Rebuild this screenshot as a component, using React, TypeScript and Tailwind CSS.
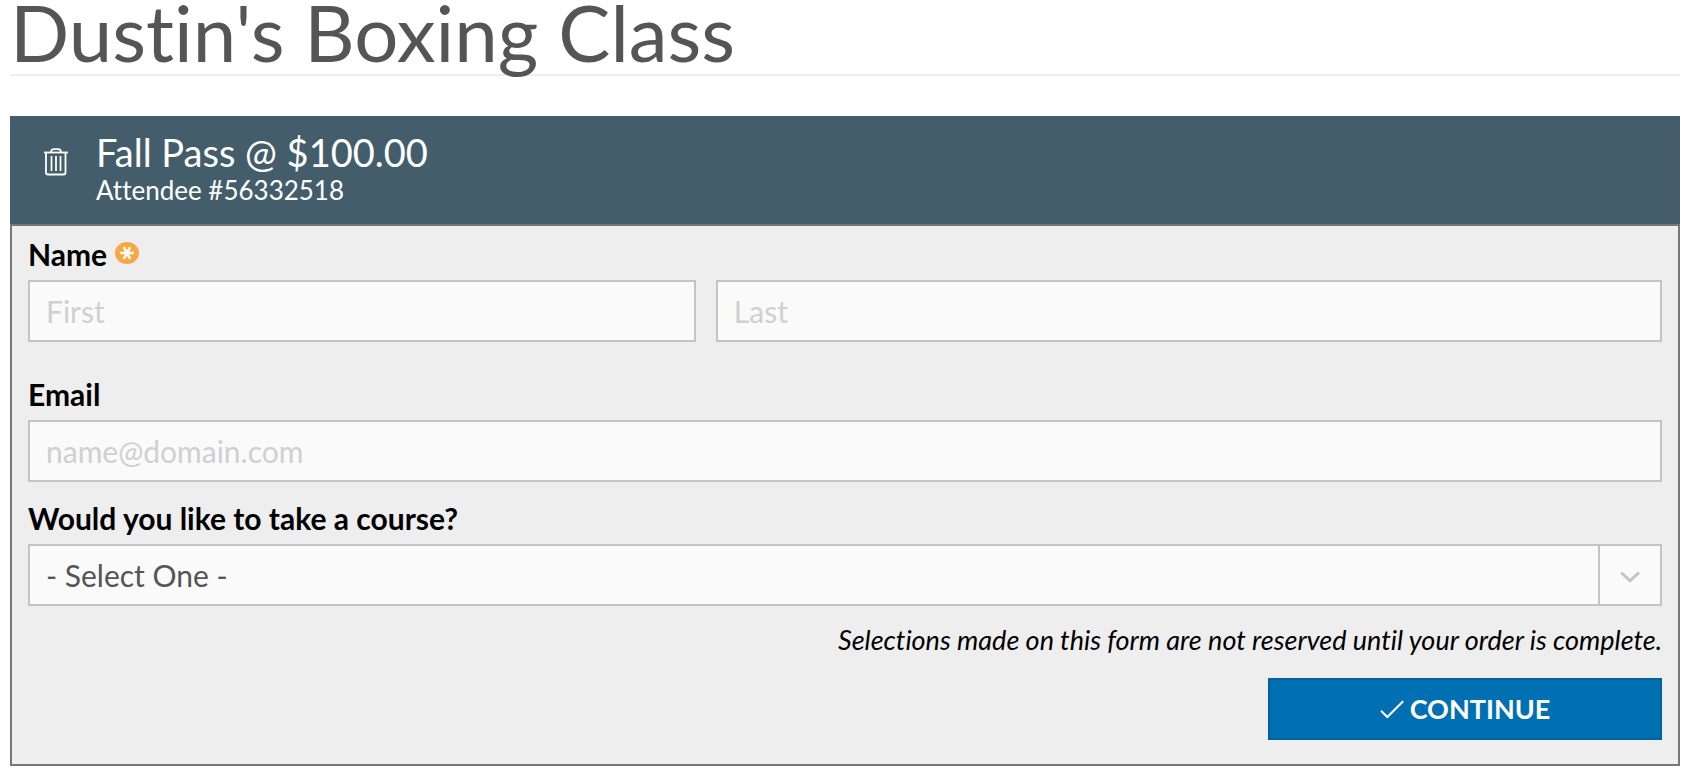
import { useState } from "react"
import type { ReactNode } from "react"

const fieldClass =
  "block h-[62px] w-full rounded-none border-2 border-[#c4c4c4] bg-[#fafafa] px-4 text-[30px] text-[#555] outline-none placeholder:text-[#d0d0d0] placeholder:opacity-100"

function TrashIcon() {
  return (
    <svg width="24" height="28" viewBox="0 0 24 28" fill="none" stroke="currentColor" aria-hidden="true">
      <path d="M0 4.5H24" strokeWidth="1.8" />
      <path d="M7 4.5C7 2 8 1.2 10 1.2H14C16 1.2 17 2 17 4.5" strokeWidth="1.7" />
      <path d="M2 4.5V24.5Q2 26.5 4 26.5H19.5Q21.5 26.5 21.5 24.5V4.5" strokeWidth="1.8" />
      <path d="M7.5 8V23M12 8V23M16.5 8V23" strokeWidth="1.7" />
    </svg>
  )
}

function RequiredIcon() {
  return (
    <svg width="24" height="22" viewBox="0 0 24 22" role="img" aria-label="Required">
      <ellipse cx="12" cy="11" rx="12" ry="11" fill="#f9a743" />
      <path d="M5.2 11H18.8M8.8 5.2L15.2 16.8M15.2 5.2L8.8 16.8" stroke="#fff" strokeWidth="2.5" fill="none" />
    </svg>
  )
}

function CheckIcon() {
  return (
    <svg width="24" height="19" viewBox="0 0 24 19" fill="none" stroke="currentColor" strokeWidth="2" aria-hidden="true">
      <path d="M1 10.8L7.3 17L23.2 1.2" />
    </svg>
  )
}

function Label({ htmlFor, children }: { htmlFor: string; children: ReactNode }) {
  return (
    <label htmlFor={htmlFor} className="mb-1.5 block text-[30px] leading-10 font-bold text-black">
      {children}
    </label>
  )
}

export default function App() {
  const [course, setCourse] = useState("")

  return (
    <main className="bg-white pr-[18px] pl-[10px] font-['Lato',sans-serif] [font-variant-ligatures:none]">
      <h1 className="border-b-2 border-[#eee] pb-[10px] text-[78px] leading-16 text-[#555]">Dustin's Boxing Class</h1>

      <section className="mt-10">
        <header className="flex items-start gap-7 bg-[#435e6a] py-4 pl-[34px] text-white">
          <button type="button" aria-label="Remove attendee" className="mt-4">
            <TrashIcon />
          </button>
          <div>
            <h2 className="text-[38px] leading-10">Fall Pass @ $100.00</h2>
            <p className="text-[26px] leading-9">Attendee #56332518</p>
          </div>
        </header>

        <form
          className="border-2 border-[#777] bg-[#eee] px-4 pt-2 pb-6"
          onSubmit={(e) => e.preventDefault()}
        >
          <div className="mb-8">
            <Label htmlFor="first-name">
              <span className="flex items-center gap-2">
                Name
                <span className="pb-0.5">
                  <RequiredIcon />
                </span>
              </span>
            </Label>
            <div className="grid grid-cols-[12fr_17fr] gap-5">
              <input id="first-name" type="text" placeholder="First" className={fieldClass} />
              <input type="text" aria-label="Last name" placeholder="Last" className={fieldClass} />
            </div>
          </div>

          <div className="mb-4">
            <Label htmlFor="email">Email</Label>
            <input id="email" type="email" placeholder="name@domain.com" className={fieldClass} />
          </div>

          <div>
            <Label htmlFor="course">Would you like to take a course?</Label>
            <div className="relative">
              <select
                id="course"
                value={course}
                onChange={(e) => setCourse(e.target.value)}
                className={`${fieldClass} appearance-none`}
              >
                <option value="">- Select One -</option>
                <option value="yes">Yes</option>
                <option value="no">No</option>
              </select>
              <span className="pointer-events-none absolute inset-y-0.5 right-0.5 flex w-[62px] items-center justify-center border-l-2 border-[#c4c4c4] pt-1 text-[#c4c4c4]">
                <svg width="20" height="12" viewBox="0 0 20 12" fill="none" stroke="currentColor" strokeWidth="3">
                  <path d="M1 1.5L10 9.8L19 1.5" />
                </svg>
              </span>
            </div>
          </div>

          <p className="mt-[14px] text-right text-[27px] leading-10 text-black italic">
            Selections made on this form are not reserved until your order is complete.
          </p>

          <div className="mt-[18px] flex justify-end">
            <button
              type="submit"
              className="flex h-[62px] w-[394px] items-center justify-center gap-1.5 border-2 border-[#00639e] bg-[#0070b3] text-[27px] font-bold text-white uppercase"
            >
              <CheckIcon />
              Continue
            </button>
          </div>
        </form>
      </section>
    </main>
  )
}
